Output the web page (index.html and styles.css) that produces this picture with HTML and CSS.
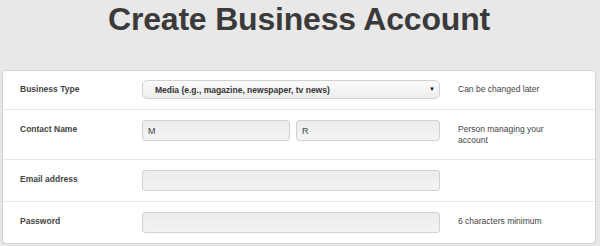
FILE: index.html
```html
<!DOCTYPE html>
<html lang="en">
<head>
  <meta charset="UTF-8" />
  <meta name="viewport" content="width=device-width, initial-scale=1" />
  <title>Create Business Account</title>
  <link rel="stylesheet" href="styles.css">
</head>
<body>
  <div class="page">
    <h1>Create Business Account</h1>

    <form class="card" id="signupForm">
      <div class="row first">
        <label for="businessType">Business Type</label>
        <div class="field">
          <div class="select-wrap">
            <select id="businessType" name="businessType">
              <option>Media (e.g., magazine, newspaper, tv news)</option>
              <option>Retail</option>
              <option>Services</option>
            </select>
          </div>
        </div>
        <div class="help">Can be changed later</div>
      </div>

      <div class="row">
        <label for="firstName">Contact Name</label>
        <div class="field split">
          <input id="firstName" name="firstName" type="text" value="M" />
          <input id="lastName" name="lastName" type="text" value="R" />
        </div>
        <div class="help">Person managing your<br>account</div>
      </div>

      <div class="row">
        <label for="email">Email address</label>
        <div class="field">
          <input id="email" name="email" type="email" />
        </div>
        <div class="help"></div>
      </div>

      <div class="row">
        <label for="password">Password</label>
        <div class="field">
          <input id="password" name="password" type="password" />
        </div>
        <div class="help">6 characters minimum</div>
      </div>
    </form>
  </div>
</body>
</html>
```

FILE: styles.css
```css
body {
  font-family: 'Liberation Sans', Arial, sans-serif;
  background: #e8e8e8;
  margin: 0;
  padding: 0;
  color: #444;
}
.page {
  margin: 0 4px 0 2px;
}
h1 {
  font-size: 32px;
  line-height: 36px;
  font-weight: bold;
  text-align: center;
  color: #3a3a3a;
  margin: 0 0 33px;
  padding-top: 1px;
  letter-spacing: -0.2px;
}
.card {
  background: #fff;
  border: 1px solid #d6d6d6;
  border-radius: 4px;
  box-shadow: 0 1px 1px rgba(0,0,0,0.12);
}
.row {
  display: grid;
  grid-template-columns: 104px 298px 1fr;
  column-gap: 18px;
  align-items: start;
  padding: 10px 0 10px 17px;
  border-top: 1px solid #e6e6e6;
}
.row.first {
  border-top: none;
  padding-top: 9px;
}
label {
  font-size: 8.5px;
  line-height: 12px;
  font-weight: bold;
  color: #444;
  padding-top: 3px;
}
.help {
  font-size: 8.5px;
  line-height: 11px;
  color: #444;
  padding: 4px 0 3px;
}
.split {
  display: flex;
  gap: 6px;
}
input {
  display: block;
  width: 100%;
  height: 21px;
  padding: 0 5px;
  font-family: inherit;
  font-size: 9px;
  color: #444;
  background: linear-gradient(#ececec, #f3f3f3);
  border: 1px solid #d2d2d2;
  border-radius: 3px;
  box-sizing: border-box;
}
.split input:first-child {
  width: 148px;
  flex-shrink: 0;
}
.select-wrap {
  position: relative;
}
.select-wrap::after {
  content: "\25BC";
  position: absolute;
  right: 5px;
  top: 6px;
  font-size: 6px;
  color: #111;
  pointer-events: none;
}
select {
  display: block;
  width: 100%;
  height: 19px;
  padding: 0 20px 0 12px;
  font-family: inherit;
  font-size: 8.5px;
  font-weight: bold;
  color: #333;
  background: linear-gradient(#fbfbfb, #ededed);
  border: 1px solid #d2d2d2;
  border-radius: 5px;
  box-sizing: border-box;
  appearance: none;
  -webkit-appearance: none;
}
```
